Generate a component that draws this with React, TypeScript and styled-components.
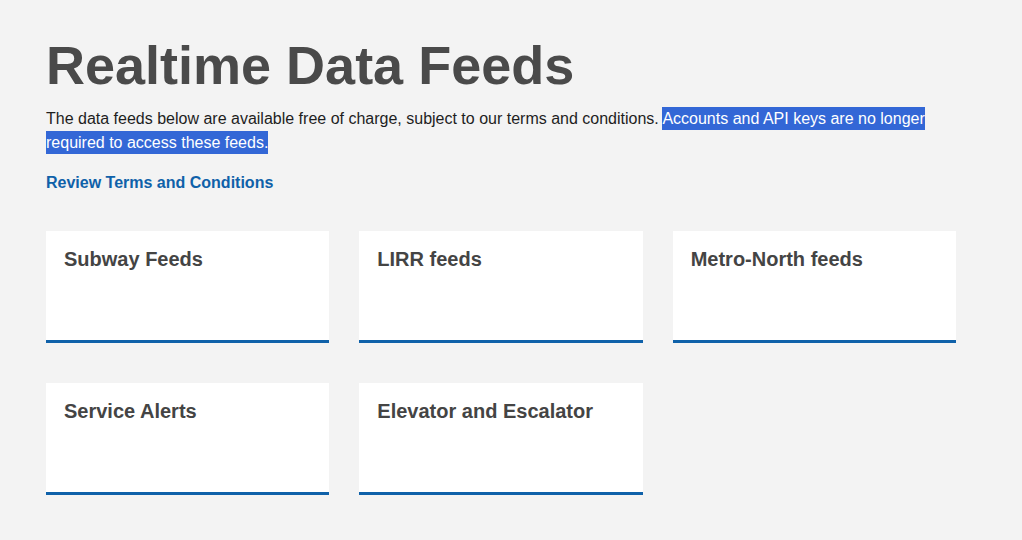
import React from "react";
import styled, { createGlobalStyle } from "styled-components";

const Global = createGlobalStyle`
  html, body {
    margin: 0;
    padding: 0;
    background: #f3f3f3;
    font-family: "Liberation Sans", Arial, sans-serif;
  }
`;

const Page = styled.main`
  width: 910px;
  padding: 34px 0 40px 46px;
`;

const Title = styled.h1`
  margin: 0 0 11px;
  font-size: 54px;
  line-height: 62px;
  font-weight: 700;
  color: #4a4a4a;
`;

const Intro = styled.p`
  margin: 0 0 16px;
  font-size: 16px;
  line-height: 24px;
  color: #1e1e1e;
`;

const Selected = styled.span`
  background: #3367d6;
  color: #ffffff;
  padding: 3px 0;
  box-decoration-break: clone;
  -webkit-box-decoration-break: clone;
`;

const TermsLink = styled.a`
  display: block;
  font-size: 16px;
  line-height: 24px;
  font-weight: 700;
  color: #0f61a9;
  text-decoration: none;
`;

const Grid = styled.div`
  margin-top: 36px;
  display: grid;
  grid-template-columns: repeat(3, 1fr);
  column-gap: 30px;
  row-gap: 40px;
`;

const Card = styled.a`
  display: block;
  box-sizing: border-box;
  height: 112px;
  padding: 16px 18px;
  background: #ffffff;
  border-bottom: 3px solid #0f61a9;
  text-decoration: none;
`;

const CardTitle = styled.h2`
  margin: 0;
  font-size: 20px;
  line-height: 24px;
  font-weight: 700;
  color: #444444;
`;

const feeds = [
  "Subway Feeds",
  "LIRR feeds",
  "Metro-North feeds",
  "Service Alerts",
  "Elevator and Escalator",
];

export default function App() {
  return (
    <>
      <Global />
      <Page>
        <Title>Realtime Data Feeds</Title>
        <Intro>
          The data feeds below are available free of charge, subject to our terms and conditions.{" "}
          <Selected>Accounts and API keys are no longer required to access these feeds.</Selected>
        </Intro>
        <TermsLink href="#">Review Terms and Conditions</TermsLink>
        <Grid>
          {feeds.map((f) => (
            <Card href="#" key={f}>
              <CardTitle>{f}</CardTitle>
            </Card>
          ))}
        </Grid>
      </Page>
    </>
  );
}
